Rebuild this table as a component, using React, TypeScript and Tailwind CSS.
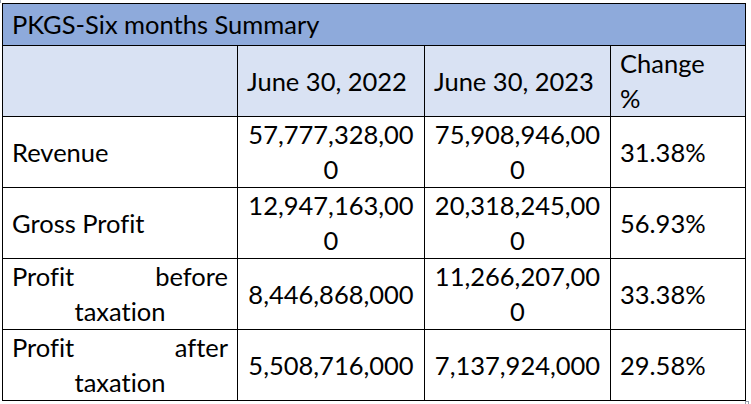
import React from 'react';

type Row = {
  label: string;
  y2022: string;
  y2023: string;
  change: string;
};

const rows: Row[] = [
  { label: 'Revenue', y2022: '57,777,328,000', y2023: '75,908,946,000', change: '31.38%' },
  { label: 'Gross Profit', y2022: '12,947,163,000', y2023: '20,318,245,000', change: '56.93%' },
  { label: 'Profit before taxation', y2022: '8,446,868,000', y2023: '11,266,207,000', change: '33.38%' },
  { label: 'Profit after taxation', y2022: '5,508,716,000', y2023: '7,137,924,000', change: '29.58%' },
];

const cell = 'border border-black align-middle px-[9px] leading-[35px]';

const App: React.FC = () => {
  return (
    <div className="relative w-[751px] h-[404px] bg-white text-black font-['Lato',sans-serif] text-[25.5px] [font-variant-ligatures:none]">
      <div className="absolute left-0 top-0 h-[3px] w-px bg-gray-400" />
      <div className="pl-[2px] pt-[3px]">
        <table className="table-fixed border-collapse w-[743px]">
          <colgroup>
            <col className="w-[235px]" />
            <col className="w-[187px]" />
            <col className="w-[186px]" />
            <col className="w-[135px]" />
          </colgroup>
          <tbody>
            <tr className="h-[42px] bg-[#8eaadb]">
              <td colSpan={4} className={`${cell} text-left`}>
                PKGS-Six months Summary
              </td>
            </tr>
            <tr className="h-[71px] bg-[#d9e2f3]">
              <td className={cell}></td>
              <td className={`${cell} text-left whitespace-nowrap`}>June 30, 2022</td>
              <td className={`${cell} text-left whitespace-nowrap`}>June 30, 2023</td>
              <td className={`${cell} text-left`}>
                Change
                <br />%
              </td>
            </tr>
            {rows.map((r) => (
              <tr key={r.label} className="h-[71px]">
                {r.label.startsWith('Profit') ? (
                  <td className={`${cell} text-justify [text-align-last:center]`}>{r.label}</td>
                ) : (
                  <td className={`${cell} text-left`}>{r.label}</td>
                )}
                <td className={`${cell} text-center break-all`}>{r.y2022}</td>
                <td className={`${cell} text-center break-all`}>{r.y2023}</td>
                <td className={`${cell} text-left`}>{r.change}</td>
              </tr>
            ))}
          </tbody>
        </table>
      </div>
      <div className="absolute left-[745px] top-[401px] w-[4px] h-[4px] border border-gray-400" />
    </div>
  );
};

export default App;
